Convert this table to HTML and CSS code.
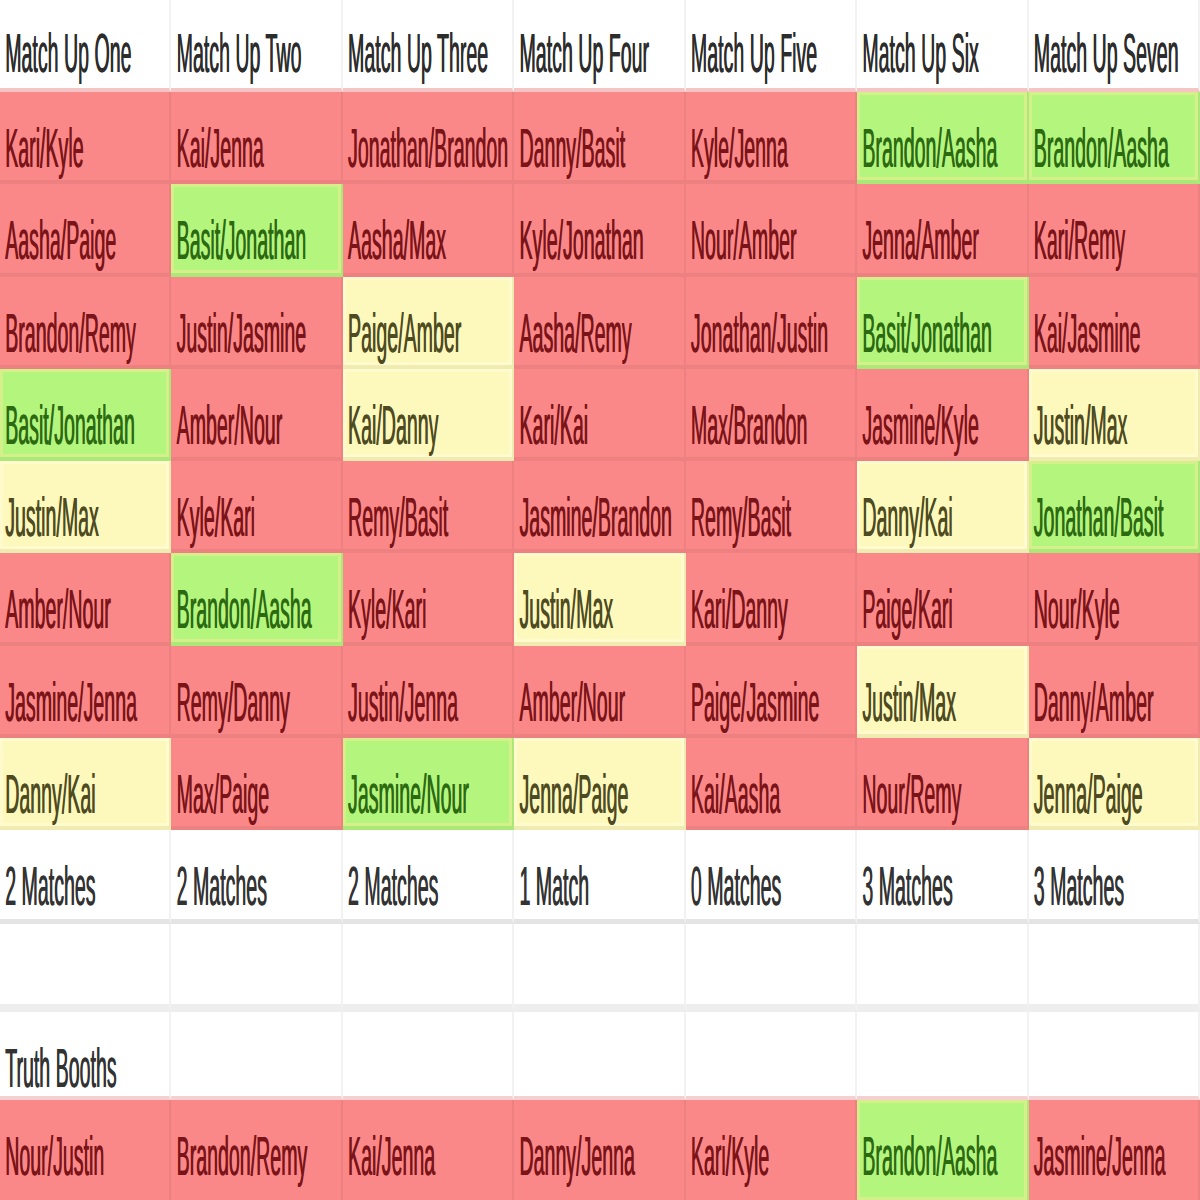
FILE: index.html
```html
<!DOCTYPE html>
<html>
<head>
<meta charset="utf-8">
<link rel="stylesheet" href="styles.css">
</head>
<body>
<div class="sheet">
  <div class="c hd"><span>Match Up One</span></div>
  <div class="c hd"><span>Match Up Two</span></div>
  <div class="c hd"><span>Match Up Three</span></div>
  <div class="c hd"><span>Match Up Four</span></div>
  <div class="c hd"><span>Match Up Five</span></div>
  <div class="c hd"><span>Match Up Six</span></div>
  <div class="c hd"><span>Match Up Seven</span></div>

  <div class="c r"><span>Kari/Kyle</span></div>
  <div class="c r"><span>Kai/Jenna</span></div>
  <div class="c r"><span>Jonathan/Brandon</span></div>
  <div class="c r"><span>Danny/Basit</span></div>
  <div class="c r"><span>Kyle/Jenna</span></div>
  <div class="c g"><span>Brandon/Aasha</span></div>
  <div class="c g"><span>Brandon/Aasha</span></div>

  <div class="c r"><span>Aasha/Paige</span></div>
  <div class="c g"><span>Basit/Jonathan</span></div>
  <div class="c r"><span>Aasha/Max</span></div>
  <div class="c r"><span>Kyle/Jonathan</span></div>
  <div class="c r"><span>Nour/Amber</span></div>
  <div class="c r"><span>Jenna/Amber</span></div>
  <div class="c r"><span>Kari/Remy</span></div>

  <div class="c r"><span>Brandon/Remy</span></div>
  <div class="c r"><span>Justin/Jasmine</span></div>
  <div class="c y"><span>Paige/Amber</span></div>
  <div class="c r"><span>Aasha/Remy</span></div>
  <div class="c r"><span>Jonathan/Justin</span></div>
  <div class="c g"><span>Basit/Jonathan</span></div>
  <div class="c r"><span>Kai/Jasmine</span></div>

  <div class="c g"><span>Basit/Jonathan</span></div>
  <div class="c r"><span>Amber/Nour</span></div>
  <div class="c y"><span>Kai/Danny</span></div>
  <div class="c r"><span>Kari/Kai</span></div>
  <div class="c r"><span>Max/Brandon</span></div>
  <div class="c r"><span>Jasmine/Kyle</span></div>
  <div class="c y"><span>Justin/Max</span></div>

  <div class="c y"><span>Justin/Max</span></div>
  <div class="c r"><span>Kyle/Kari</span></div>
  <div class="c r"><span>Remy/Basit</span></div>
  <div class="c r"><span>Jasmine/Brandon</span></div>
  <div class="c r"><span>Remy/Basit</span></div>
  <div class="c y"><span>Danny/Kai</span></div>
  <div class="c g"><span>Jonathan/Basit</span></div>

  <div class="c r"><span>Amber/Nour</span></div>
  <div class="c g"><span>Brandon/Aasha</span></div>
  <div class="c r"><span>Kyle/Kari</span></div>
  <div class="c y"><span>Justin/Max</span></div>
  <div class="c r"><span>Kari/Danny</span></div>
  <div class="c r"><span>Paige/Kari</span></div>
  <div class="c r"><span>Nour/Kyle</span></div>

  <div class="c r"><span>Jasmine/Jenna</span></div>
  <div class="c r"><span>Remy/Danny</span></div>
  <div class="c r"><span>Justin/Jenna</span></div>
  <div class="c r"><span>Amber/Nour</span></div>
  <div class="c r"><span>Paige/Jasmine</span></div>
  <div class="c y"><span>Justin/Max</span></div>
  <div class="c r"><span>Danny/Amber</span></div>

  <div class="c y"><span>Danny/Kai</span></div>
  <div class="c r"><span>Max/Paige</span></div>
  <div class="c g"><span>Jasmine/Nour</span></div>
  <div class="c y"><span>Jenna/Paige</span></div>
  <div class="c r"><span>Kai/Aasha</span></div>
  <div class="c r"><span>Nour/Remy</span></div>
  <div class="c y"><span>Jenna/Paige</span></div>

  <div class="c m"><span>2 Matches</span></div>
  <div class="c m"><span>2 Matches</span></div>
  <div class="c m"><span>2 Matches</span></div>
  <div class="c m"><span>1 Match</span></div>
  <div class="c m"><span>0 Matches</span></div>
  <div class="c m"><span>3 Matches</span></div>
  <div class="c m"><span>3 Matches</span></div>

  <div class="c e"></div>
  <div class="c e"></div>
  <div class="c e"></div>
  <div class="c e"></div>
  <div class="c e"></div>
  <div class="c e"></div>
  <div class="c e"></div>

  <div class="c t"><span>Truth Booths</span></div>
  <div class="c t"></div>
  <div class="c t"></div>
  <div class="c t"></div>
  <div class="c t"></div>
  <div class="c t"></div>
  <div class="c t"></div>

  <div class="c r last"><span>Nour/Justin</span></div>
  <div class="c r last"><span>Brandon/Remy</span></div>
  <div class="c r last"><span>Kai/Jenna</span></div>
  <div class="c r last"><span>Danny/Jenna</span></div>
  <div class="c r last"><span>Kari/Kyle</span></div>
  <div class="c g last"><span>Brandon/Aasha</span></div>
  <div class="c r last"><span>Jasmine/Jenna</span></div>
</div>
</body>
</html>
```

FILE: styles.css
```css
html, body {
  margin: 0;
  padding: 0;
  background: #ffffff;
}

body {
  width: 1200px;
  height: 1200px;
  overflow: hidden;
  font-family: "Liberation Sans", Arial, sans-serif;
}

.sheet {
  display: grid;
  grid-template-columns: repeat(7, 1fr);
  grid-template-rows: 92px repeat(8, 92.25px) 94px 88px 88px 100px;
  width: 1200px;
  height: 1200px;
}

.c {
  box-sizing: border-box;
  padding: 44px 0 0 5px;
  border-right: 2px solid rgba(0, 0, 0, 0.05);
  border-bottom: 4px solid rgba(0, 0, 0, 0.05);
  background-clip: padding-box;
  overflow: visible;
  white-space: nowrap;
  color: #303030;
}

.c span {
  display: inline-block;
  font-size: 19.6px;
  line-height: 22px;
  height: 22px;
  transform: scaleY(2.85);
  transform-origin: 50% 50%;
  text-shadow: 0.4px 0 0 currentColor;
}

.hd {
  background: #ffffff;
  padding-top: 41px;
  border-bottom-color: rgba(240, 160, 160, 0.6);
  color: #2c2c2c;
}

.r {
  background: #fa8888;
  color: #7a1418;
}

.g {
  background: #b4f57e;
  color: #2c6a12;
  box-shadow: inset 0 0 0 3px rgba(240, 235, 150, 0.55);
}

.y {
  background: #fdf8bb;
  color: #4e4b22;
  box-shadow: inset 0 0 0 3px rgba(255, 252, 215, 0.7);
}

.m {
  background: #ffffff;
  color: #333333;
  border-bottom: 5px solid #e4e4e4;
}

.e {
  background: #ffffff;
  border-bottom: 8px solid #eeeeee;
}

.t {
  background: #ffffff;
  color: #333333;
  border-bottom: 4px solid #f4d0d0;
}

.last {
  border-bottom: none;
}
```
